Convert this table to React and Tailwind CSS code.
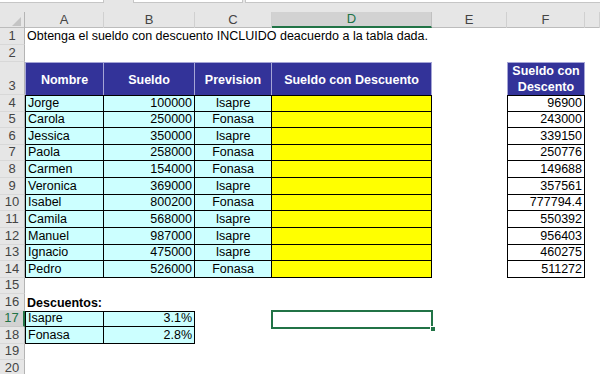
import React from 'react';

// column tracks: row header, A..F, and the sliver of G
const COLS = 'grid grid-cols-[25px_79px_91px_77px_160px_75px_78px_15px]';

const people = [
  ['Jorge', 100000, 'Isapre', 96900],
  ['Carola', 250000, 'Fonasa', 243000],
  ['Jessica', 350000, 'Isapre', 339150],
  ['Paola', 258000, 'Fonasa', 250776],
  ['Carmen', 154000, 'Fonasa', 149688],
  ['Veronica', 369000, 'Isapre', 357561],
  ['Isabel', 800200, 'Fonasa', '777794.4'],
  ['Camila', 568000, 'Isapre', 550392],
  ['Manuel', 987000, 'Isapre', 956403],
  ['Ignacio', 475000, 'Isapre', 460275],
  ['Pedro', 526000, 'Fonasa', 511272],
];

// heights of rows 4..14
const dataHeights = ['h-[17px]', 'h-[16px]', 'h-[17px]', 'h-[16px]', 'h-[17px]', 'h-[17px]', 'h-[16px]', 'h-[17px]', 'h-[17px]', 'h-[16px]', 'h-[17px]'];

const cyan = 'bg-[#ccffff] border-r border-b border-black';
const navy = 'bg-[#333399] text-white font-bold justify-center text-center border-t border-r border-[#a5a5d6]';

function Cell({ className = '', middle, children }) {
  return (
    <div
      className={`flex whitespace-nowrap px-[2px] text-[12.5px] leading-[13px] text-black ${
        middle ? 'items-center' : 'items-end pb-[1px]'
      } ${className}`}
    >
      {children}
    </div>
  );
}

function SheetRow({ n, h, active, children }) {
  return (
    <div className={`${COLS} ${h}`}>
      <div
        className={`flex items-end justify-center pb-[1px] text-[13px] leading-[14px] border-b ${
          active
            ? 'bg-[#d2d2d2] text-[#217346] border-r-2 border-r-[#217346] border-b-[#c8c8c8]'
            : 'bg-[#e6e6e6] text-[#444444] border-r border-r-[#b4b4b4] border-b-[#d8d8d8]'
        }`}
      >
        {n}
      </div>
      {children}
    </div>
  );
}

function Blank({ count }) {
  return Array.from({ length: count }, (_, i) => <Cell key={i} />);
}

function FormulaStrip() {
  return (
    <div className="flex h-[12px] bg-[#e6e6e6]">
      <div className="h-[3px] w-[104px] bg-white border-b border-r border-[#c6c6c6]" />
      <div className="w-[29px]" />
      <div className="h-[3px] w-[110px] bg-white border-b border-x border-[#c6c6c6]" />
      <div className="w-[2px]" />
      <div className="h-[3px] flex-1 bg-white border-b border-l border-[#c6c6c6]" />
    </div>
  );
}

function ColumnHeaders() {
  const letters = ['A', 'B', 'C', 'D', 'E', 'F', ''];
  return (
    <div className={`${COLS} h-[16px] bg-[#e6e6e6] border-b border-[#bcbcbc] text-[13px] leading-[14px]`}>
      <div className="relative border-r border-[#b4b4b4]">
        <svg className="absolute right-[3px] bottom-[2px]" width="9" height="9" viewBox="0 0 9 9">
          <polygon points="9,0 9,9 0,9" fill="#c4c4c4" />
        </svg>
      </div>
      {letters.map((l, i) =>
        l === 'D' ? (
          <div key={i} className="flex items-center justify-center bg-[#d2d2d2] text-[#217346] border-r border-[#c0c0c0] border-b-2 border-b-[#217346]">
            {l}
          </div>
        ) : (
          <div key={i} className="flex items-center justify-center text-[#444444] border-r border-[#d0d0d0]">
            {l}
          </div>
        )
      )}
    </div>
  );
}

export default function App() {
  return (
    <div className="w-[600px] h-[374px] overflow-hidden bg-white font-['Liberation_Sans',Arial,sans-serif]">
      <FormulaStrip />
      <ColumnHeaders />

      <SheetRow n={1} h="h-[17px]">
        <Cell className="pb-[2px]">Obtenga el sueldo con descuento INCLUIDO deacuerdo a la tabla dada.</Cell>
        <Blank count={6} />
      </SheetRow>
      <SheetRow n={2} h="h-[17px]">
        <Blank count={7} />
      </SheetRow>

      <SheetRow n={3} h="h-[33px]">
        <Cell middle className={`${navy} border-l pt-[2px]`}>Nombre</Cell>
        <Cell middle className={`${navy} pt-[2px]`}>Sueldo</Cell>
        <Cell middle className={`${navy} pt-[2px]`}>Prevision</Cell>
        <Cell middle className={`${navy} pt-[2px]`}>Sueldo con Descuento</Cell>
        <Cell />
        <Cell middle className={`${navy} border-l leading-[16px]`}>
          Sueldo con
          <br />
          Descento
        </Cell>
        <Cell />
      </SheetRow>

      {people.map(([name, sueldo, prevision, neto], i) => {
        const top = i === 0 ? 'border-t' : '';
        return (
          <SheetRow key={name} n={i + 4} h={dataHeights[i]}>
            <Cell className={`${cyan} border-l ${top}`}>{name}</Cell>
            <Cell className={`${cyan} justify-end ${top}`}>{sueldo}</Cell>
            <Cell className={`${cyan} justify-center ${top}`}>{prevision}</Cell>
            <Cell className={`bg-[#ffff00] border-r border-b border-black ${top}`} />
            <Cell />
            <Cell className={`bg-white border-l border-r border-b border-black justify-end text-[#222222] ${top}`}>{neto}</Cell>
            <Cell />
          </SheetRow>
        );
      })}

      <SheetRow n={15} h="h-[16px]">
        <Blank count={7} />
      </SheetRow>
      <SheetRow n={16} h="h-[17px]">
        <Cell className="font-bold">Descuentos:</Cell>
        <Blank count={6} />
      </SheetRow>
      <SheetRow n={17} h="h-[16px]" active>
        <Cell className={`${cyan} border-l border-t`}>Isapre</Cell>
        <Cell className={`${cyan} border-t justify-end`}>3.1%</Cell>
        <Cell />
        <Cell className="relative">
          <div className="pointer-events-none absolute -left-px -top-px -right-px -bottom-[2px] border-2 border-[#217346]" />
          <div className="absolute -right-[4px] -bottom-[5px] h-[6px] w-[6px] bg-[#217346] border border-white" />
        </Cell>
        <Blank count={3} />
      </SheetRow>
      <SheetRow n={18} h="h-[17px]">
        <Cell className={`${cyan} border-l`}>Fonasa</Cell>
        <Cell className={`${cyan} justify-end`}>2.8%</Cell>
        <Blank count={5} />
      </SheetRow>
      <SheetRow n={19} h="h-[16px]">
        <Blank count={7} />
      </SheetRow>
      <SheetRow n={20} h="h-[17px]">
        <Blank count={7} />
      </SheetRow>
    </div>
  );
}
